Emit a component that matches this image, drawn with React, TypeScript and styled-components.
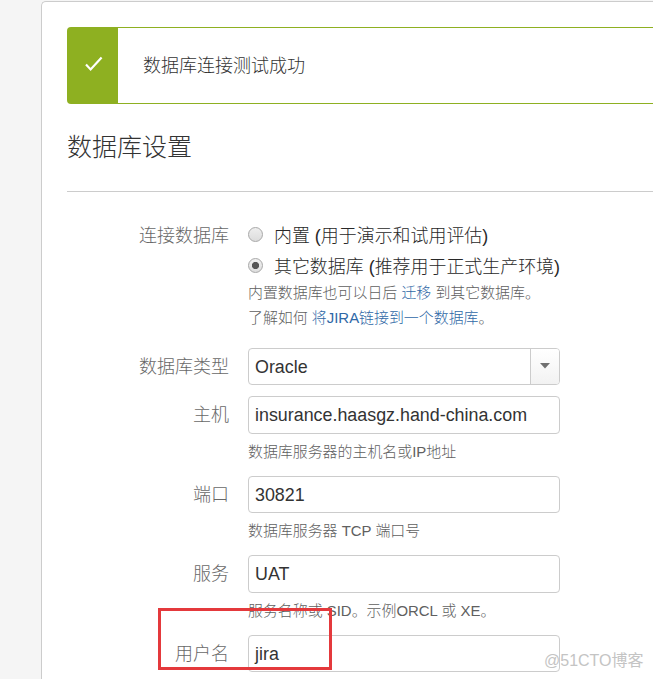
import React from "react";
import styled, { createGlobalStyle } from "styled-components";

const GlobalStyle = createGlobalStyle`
  * { box-sizing: border-box; }
  html, body { margin: 0; padding: 0; overflow: hidden; background: #f5f5f5; }
  body { font-family: "Liberation Sans", "Noto Sans CJK SC", sans-serif; color: #333; }
`;

const Page = styled.div`
  position: relative;
  width: 653px;
  height: 679px;
  overflow: hidden;
  padding: 1px 0 0 41px;
  background: #f5f5f5;
`;

const Panel = styled.main`
  height: 700px;
  border: 1px solid #ccc;
  border-right: 0;
  border-radius: 5px 0 0 0;
  background: #fff;
  padding: 25px 0 0 25px;
`;

const Message = styled.div`
  display: flex;
  align-items: stretch;
  height: 77px;
  border: 1px solid #8eb021;
  border-right: 0;
  border-radius: 4px 0 0 4px;
`;

const MessageIcon = styled.div`
  width: 50px;
  background: #8eb021;
  display: flex;
  align-items: center;
  justify-content: center;
  svg { display: block; margin-top: -3px; margin-left: 1px; }
`;

const MessageText = styled.p`
  margin: 0;
  padding: 25px 0 0 25px;
  font-size: 18px;
  line-height: 26px;
  font-weight: 300;
`;

const Heading = styled.h2`
  margin: 0;
  height: 88px;
  padding-top: 25px;
  border-bottom: 1px solid #ccc;
  font-size: 25px;
  line-height: 36px;
  font-weight: 300;
`;

const Form = styled.form`
  padding-top: 30px;
`;

const Row = styled.div<{ $height: number }>`
  display: flex;
  align-items: flex-start;
  height: ${(p) => p.$height}px;
`;

const Label = styled.label<{ $top?: number }>`
  width: 162px;
  margin-right: 19px;
  padding-top: ${(p) => p.$top ?? 6}px;
  text-align: right;
  font-size: 18px;
  line-height: 26px;
  font-weight: 300;
  color: #686868;
`;

const Control = styled.div`
  width: 330px;
`;

const Option = styled.div`
  display: flex;
  align-items: flex-start;
  height: 31px;
  font-size: 17.95px;
  line-height: 28px;
  font-weight: 300;
  color: #282828;
  white-space: nowrap;
`;

const Radio = styled.span<{ $checked?: boolean }>`
  width: 15px;
  height: 15px;
  margin: 5px 11px 0 0;
  border: 1px solid #a8a8a8;
  border-radius: 50%;
  background: ${(p) =>
    p.$checked
      ? "radial-gradient(circle, #555 0 3.2px, transparent 4px), linear-gradient(#f0f0f0, #dedede)"
      : "linear-gradient(#eee, #dcdcdc)"};
`;

const Help = styled.div<{ $offset?: number }>`
  margin-top: ${(p) => p.$offset ?? 5}px;
  font-size: 14.93px;
  line-height: 25px;
  font-weight: 300;
  color: #606060;
  white-space: nowrap;
`;

const Link = styled.a`
  color: #2f68a6;
`;

const Input = styled.div<{ $height?: number }>`
  display: flex;
  justify-content: space-between;
  width: 312px;
  height: ${(p) => p.$height ?? 37}px;
  border: 1px solid #ccc;
  border-radius: 4px;
  background: #fff;
  padding-left: 6px;
  font-size: 17.87px;
  line-height: 36px;
  overflow: hidden;
`;

const Arrow = styled.span`
  width: 29px;
  border-left: 1px solid #ccc;
  background: linear-gradient(#fff, #f2f2f2);
  display: flex;
  justify-content: center;
  padding-top: 14px;
`;

const Highlight = styled.div`
  position: absolute;
  left: 158px;
  top: 608px;
  width: 174px;
  height: 62px;
  border: 3px solid #e4393c;
`;

const Watermark = styled.div`
  position: absolute;
  left: 544px;
  top: 650px;
  font-size: 16px;
  line-height: 22px;
  color: #c4c4c4;
  white-space: nowrap;
`;

export default function App() {
  return (
    <Page>
      <GlobalStyle />
      <Panel>
        <Message>
          <MessageIcon>
            <svg width="18" height="16" viewBox="0 0 18 16" fill="none" stroke="#fff" strokeWidth="2.2">
              <path d="M1 8.6 5.6 13.4 16.6 1.4" />
            </svg>
          </MessageIcon>
          <MessageText>数据库连接测试成功</MessageText>
        </Message>
        <Heading>数据库设置</Heading>
        <Form>
          <Row $height={126}>
            <Label $top={1}>连接数据库</Label>
            <Control>
              <Option><Radio />内置 (用于演示和试用评估)</Option>
              <Option><Radio $checked />其它数据库 (推荐用于正式生产环境)</Option>
              <Help $offset={-4}>
                <div>内置数据库也可以日后 <Link>迁移</Link> 到其它数据库。</div>
                <div>了解如何 <Link>将JIRA链接到一个数据库</Link>。</div>
              </Help>
            </Control>
          </Row>
          <Row $height={48}>
            <Label>数据库类型</Label>
            <Control>
              <Input>
                <span>Oracle</span>
                <Arrow>
                  <svg width="10" height="6" viewBox="0 0 10 6"><path d="M0 0H10L5 5.5Z" fill="#707070" /></svg>
                </Arrow>
              </Input>
            </Control>
          </Row>
          <Row $height={80}>
            <Label>主机</Label>
            <Control>
              <Input $height={38}>insurance.haasgz.hand-china.com</Input>
              <Help>数据库服务器的主机名或IP地址</Help>
            </Control>
          </Row>
          <Row $height={79}>
            <Label>端口</Label>
            <Control>
              <Input>30821</Input>
              <Help>数据库服务器 TCP 端口号</Help>
            </Control>
          </Row>
          <Row $height={80}>
            <Label>服务</Label>
            <Control>
              <Input $height={38}>UAT</Input>
              <Help>服务名称或 SID。示例ORCL 或 XE。</Help>
            </Control>
          </Row>
          <Row $height={48}>
            <Label>用户名</Label>
            <Control>
              <Input>jira</Input>
            </Control>
          </Row>
        </Form>
      </Panel>
      <Highlight />
      <Watermark>@51CTO博客</Watermark>
    </Page>
  );
}
